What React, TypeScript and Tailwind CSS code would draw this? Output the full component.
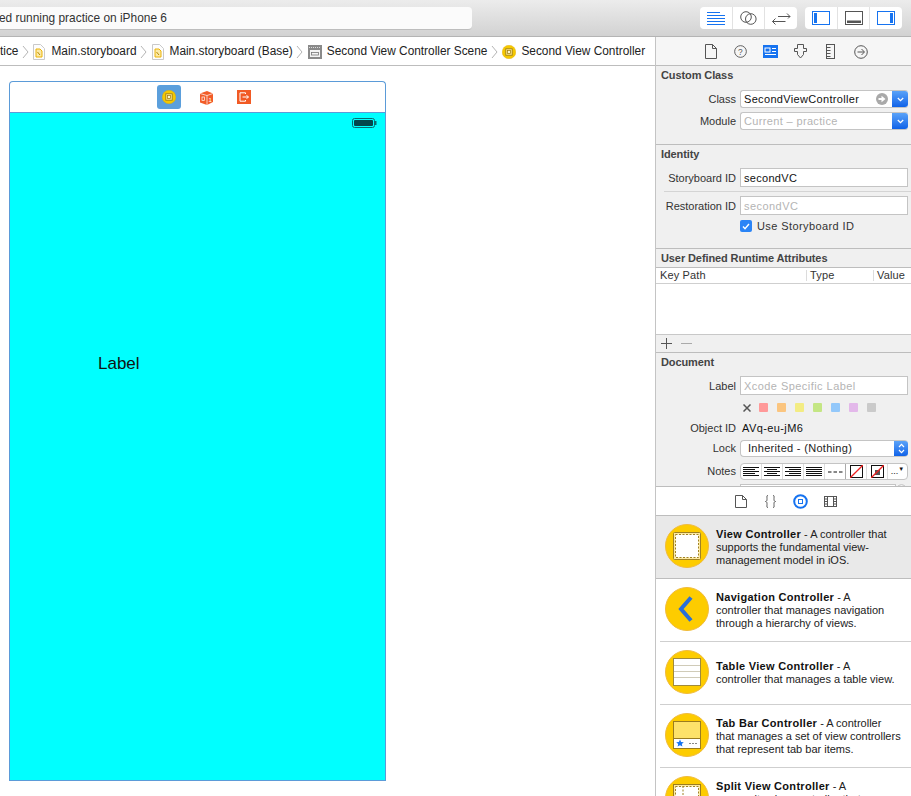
import React from "react";

const Chevron = () => (
  <svg width="8" height="14" viewBox="0 0 8 14" className="mx-[3.5px] shrink-0" fill="none" stroke="#b5b5b5" strokeWidth="1">
    <path d="M1 1l5 6-5 6" />
  </svg>
);

const DocIcon = () => (
  <svg width="12" height="16" viewBox="0 0 12 16" className="shrink-0 mr-[6px]">
    <path d="M.5.5h7l4 4v11H.5z" fill="#fdfdfd" stroke="#c9c9c9" />
    <path d="M3 5h4l2 2v6H3z" fill="#fbe9a8" stroke="#eab308" />
    <path d="M4.5 8l2.5 3" stroke="#b58a00" fill="none" />
  </svg>
);

const YellowDot = ({ size = 14 }: { size?: number }) => (
  <svg width={size} height={size} viewBox="0 0 14 14" className="shrink-0">
    <circle cx="7" cy="7" r="6.8" fill="#f5c800" stroke="#e0a800" strokeWidth=".4" />
    <rect x="3.8" y="3.8" width="6.4" height="6.4" fill="#fbe48a" stroke="#9a7a10" strokeWidth=".8" />
    <rect x="5.6" y="5.6" width="2.8" height="2.8" fill="#fff6c8" stroke="#9a7a10" strokeWidth=".7" />
  </svg>
);

const SegBtn = ({ children, w }: { children: React.ReactNode; w: string }) => (
  <div className={`${w} h-full flex items-center justify-center border-r border-[#e2e2e2] last:border-r-0`}>{children}</div>
);

const Row = ({ label, children, className = "", nudge }: { label: string; children: React.ReactNode; className?: string; nudge?: boolean }) => (
  <div className={`flex items-center shrink-0 ${className}`}>
    <div className={`w-[80px] text-right text-[11px] text-[#333] shrink-0 leading-none ${nudge ? "pt-[1px]" : ""}`}>{label}</div>
    <div className="ml-[4px] w-[168px] h-full">{children}</div>
  </div>
);

const Field = ({ text, muted }: { text: string; muted?: boolean }) => (
  <div className={`h-full bg-white border border-[#c4c4c4] pl-[3px] pt-[1px] flex items-center text-[11px] ${muted ? "text-[#b4b4b4] tracking-[.45px]" : "text-[#111] tracking-[.3px]"}`}>{text}</div>
);

const Blue = () => (
  <div className="w-[16px] h-full rounded-r-[3px] bg-gradient-to-b from-[#5aa2f8] to-[#0e62e8] flex items-center justify-center shrink-0">
    <svg width="7" height="5" viewBox="0 0 7 5" fill="none" stroke="#fff" strokeWidth="1.3"><path d="M.8 1l2.7 2.6L6.2 1" /></svg>
  </div>
);

const Header = ({ children }: { children: React.ReactNode }) => (
  <div className="pl-[5px] text-[11px] font-bold text-[#444] leading-[13px] tracking-[-.1px] shrink-0">{children}</div>
);

const Align = ({ rows }: { rows: number[] }) => (
  <svg width="16" height="10" viewBox="0 0 16 10" stroke="#111" strokeWidth="1" fill="none">
    {[1, 3, 5, 7, 9].map((y, i) => <path key={y} d={`M${(16 - rows[i]) * (rows[5] ?? 0)} ${y - .5}h${rows[i]}`} />)}
  </svg>
);

const ListItem = ({ icon, title, first, rest, active }: { icon: React.ReactNode; title: string; first: string; rest: string[]; active?: boolean }) => (
  <div className={`${active ? "bg-[#e9e9e9]" : "bg-white"} h-[63px] shrink-0`}>
    <div className={`${active ? "border-b border-[#bdbdbd] pl-[9px]" : "ml-[4px] border-b border-[#cfcfcf] pl-[5px]"} h-full flex items-center`}>
      <div className="w-[44px] h-[44px] shrink-0 -mt-[3px]">{icon}</div>
      <div className="ml-[7px] text-[11px] leading-[13px] text-[#222]">
        <div><span className="font-bold text-[#111] tracking-[.3px]">{title}</span> - {first}</div>
        {rest.map((r) => <div key={r}>{r}</div>)}
      </div>
    </div>
  </div>
);

const Circle = ({ children }: { children: React.ReactNode }) => (
  <svg width="44" height="44" viewBox="0 0 44 44">
    <circle cx="22" cy="22" r="21.5" fill="#fdcc00" stroke="#f0bb3c" />
    {children}
  </svg>
);

export default function App() {
  return (
    <div className="w-[911px] h-[796px] overflow-hidden bg-white flex flex-col [font-family:'Liberation_Sans',sans-serif]">
      {/* Toolbar */}
      <div className="h-[37px] shrink-0 bg-gradient-to-b from-[#ececec] to-[#d2d2d2] border-b border-[#b4b4b4] flex items-start">
        <div className="mt-[7px] w-[472px] h-[23px] bg-[#fbfbfb] rounded-r-[4px] border-b border-[#bdbdbd] pt-[1px] flex items-center text-[11.9px] text-[#333] overflow-hidden whitespace-nowrap">
          <span className="-ml-[1px]">ed running practice on iPhone 6</span>
        </div>
        <div className="ml-auto mr-[9px] mt-[7px] flex gap-[8px]">
          <div className="h-[22px] w-[97px] bg-white rounded-[4px] flex overflow-hidden">
            <SegBtn w="w-[33px]">
              <svg width="18" height="13" viewBox="0 0 18 13" stroke="#1673f0" fill="none"><path d="M0 .5h13M0 3.5h18M0 6.5h18M0 9.5h18M0 12.5h18" /></svg>
            </SegBtn>
            <SegBtn w="w-[32px]">
              <svg width="17" height="14" viewBox="0 0 17 14" stroke="#555" fill="none"><circle cx="6" cy="6" r="5.3" /><circle cx="10.8" cy="8" r="5.3" /></svg>
            </SegBtn>
            <SegBtn w="w-[32px]">
              <svg width="19" height="13" viewBox="0 0 19 13" stroke="#555" fill="none"><path d="M6 4.5h12M15 1.5l3 3-2 2M0.5 9.5h13M3.5 6.5l-3 3 3 3" /></svg>
            </SegBtn>
          </div>
          <div className="h-[22px] w-[97px] bg-white rounded-[4px] flex overflow-hidden">
            <SegBtn w="w-[33px]">
              <svg width="18" height="14" viewBox="0 0 18 14"><rect x=".5" y=".5" width="17" height="13" fill="none" stroke="#1673f0" /><rect x="2" y="2" width="3" height="10" fill="#1673f0" /></svg>
            </SegBtn>
            <SegBtn w="w-[32px]">
              <svg width="18" height="14" viewBox="0 0 18 14"><rect x=".5" y=".5" width="17" height="13" fill="none" stroke="#555" /><rect x="2" y="9.5" width="14" height="2.5" fill="#555" /></svg>
            </SegBtn>
            <SegBtn w="w-[32px]">
              <svg width="18" height="14" viewBox="0 0 18 14"><rect x=".5" y=".5" width="17" height="13" fill="none" stroke="#1673f0" /><rect x="13" y="2" width="3" height="10" fill="#1673f0" /></svg>
            </SegBtn>
          </div>
        </div>
      </div>

      <div className="flex-1 flex min-h-0">
        {/* Editor */}
        <div className="w-[656px] shrink-0 flex flex-col border-r border-[#c4c4c4]">
          <div className="h-[29px] shrink-0 border-b border-[#bdbdbd] pt-[1px] flex items-center overflow-hidden whitespace-nowrap text-[11.87px] text-[#222]">
            <span>tice</span><Chevron /><DocIcon /><span>Main.storyboard</span><Chevron /><DocIcon /><span>Main.storyboard (Base)</span><Chevron />
            <svg width="14" height="14" viewBox="0 0 14 14" className="shrink-0 mr-[5px]"><rect width="14" height="14" fill="#8a8a8a" /><rect x="2" y="5" width="10" height="7" fill="#f4f4f4" /><rect x="3.5" y="7.5" width="7" height="2.5" fill="none" stroke="#777" strokeWidth=".8" /><path d="M1 2.5h12" stroke="#ddd" strokeDasharray="1 1" /></svg>
            <span>Second View Controller Scene</span><Chevron />
            <span className="mr-[5px] flex"><YellowDot /></span><span>Second View Controller</span>
          </div>
          <div className="flex-1 pl-[9px] pt-[15px]">
            <div className="w-[377px] h-[700px] flex flex-col">
              <div className="h-[31px] shrink-0 rounded-t-[4px] border border-b-0 border-[#5b9bd8] flex items-center pl-[147px] bg-white">
                <div className="w-[24px] h-[24px] rounded-[3px] bg-[#5b9fdc] flex items-center justify-center"><YellowDot /></div>
                <svg width="15" height="15" viewBox="0 0 15 15" className="ml-[18px]">
                  <path d="M1 3.5L8 1l6 2.5v8.5L8 15l-7-2.5z" fill="#f25c28" />
                  <path d="M8 5.5V15M1 3.5l7 2 6-2" stroke="#fff" strokeWidth=".7" fill="none" />
                  <rect x="3" y="7" width="2.4" height="3.6" fill="none" stroke="#fff" strokeWidth=".7" />
                  <text x="9.6" y="12" fontSize="6" fill="#fff" fontFamily="Liberation Sans">1</text>
                </svg>
                <div className="ml-[23px] w-[14px] h-[14px] bg-[#f15a24] flex items-center justify-center">
                  <svg width="10" height="10" viewBox="0 0 10 10" fill="none" stroke="#fff"><path d="M6.5 2V.8H1v8.4h5.5V8M3.5 5h6M7.6 3.2L9.4 5 7.6 6.8" /></svg>
                </div>
              </div>
              <div className="flex-1 bg-[#00ffff] border border-[#5b9bd8] flex flex-col">
                <div className="flex justify-end pt-[5px] pr-[8px]">
                  <svg width="25" height="10" viewBox="0 0 25 10"><rect x=".5" y=".5" width="22" height="9" rx="2" fill="none" stroke="#0a6b70" /><rect x="2" y="2" width="19" height="6" rx="1" fill="#03474d" /><rect x="23" y="3" width="1.5" height="4" fill="#0a6b70" /></svg>
                </div>
                <div className="mt-[226px] ml-[88px] text-[17px] leading-[20px] text-[#111]">Label</div>
              </div>
            </div>
          </div>
        </div>

        {/* Inspector */}
        <div className="flex-1 min-w-0 flex flex-col bg-[#f0f0f0] overflow-hidden">
          <div className="h-[29px] shrink-0 border-b border-[#bdbdbd] bg-[#f6f6f6] pt-[1px] flex items-center pl-[49px]">
            <svg width="12" height="15" viewBox="0 0 12 15" fill="none" stroke="#555"><path d="M.5.5h7l4 4v10H.5zM7.5.5v4h4" /></svg>
            <svg width="13" height="13" viewBox="0 0 14 14" fill="none" stroke="#555" className="ml-[17px]"><circle cx="7" cy="7" r="6.3" /><text x="4.4" y="10.5" fontSize="9" fill="#555" stroke="none" fontFamily="Liberation Sans">?</text></svg>
            <svg width="15" height="13" viewBox="0 0 15 13" className="ml-[16px]"><rect width="15" height="13" fill="#1673f0" /><rect x="2" y="3" width="5" height="4" fill="none" stroke="#fff" /><path d="M9 3.5h4M9 6.5h4M2 9.5h11" stroke="#fff" /></svg>
            <svg width="13" height="15" viewBox="0 0 13 15" fill="none" stroke="#555" className="ml-[16px]"><path d="M3.5.5h6v4h3v3h-3v3l-3 3.5-3-3.5v-3h-3v-3h3z" /></svg>
            <svg width="9" height="15" viewBox="0 0 9 15" fill="none" stroke="#555" className="ml-[19px]"><rect x=".5" y=".5" width="8" height="14" /><path d="M.5 3.5h4M.5 6.5h4M.5 9.5h4M.5 12.5h4" /></svg>
            <svg width="14" height="14" viewBox="0 0 14 14" fill="none" stroke="#555" className="ml-[19px]"><circle cx="7" cy="7" r="6.3" /><path d="M3.5 7h6.5M7.5 4l3 3-3 3" /></svg>
          </div>

          {/* Custom Class */}
          <div className="h-[79px] shrink-0 border-b border-[#bdbdbd] pt-[3px] flex flex-col">
            <Header>Custom Class</Header>
            <Row label="Class" className="h-[18px] mt-[8px]">
              <div className="h-full flex rounded-[3px] bg-white border border-[#c4c4c4] border-r-0 text-[11px] text-[#111] items-center pl-[3px]">
                <span className="flex-1 tracking-[.33px]">SecondViewController</span>
                <svg width="12" height="12" viewBox="0 0 12 12" className="mr-[4px]"><circle cx="6" cy="6" r="6" fill="#a9a9a9" /><path d="M2.5 5h3V2.8L9.5 6l-4 3.2V7h-3z" fill="#fff" /></svg>
                <Blue />
              </div>
            </Row>
            <Row label="Module" className="h-[18px] mt-[4px]">
              <div className="h-full flex rounded-[3px] bg-white border border-[#c4c4c4] border-r-0 text-[11px] text-[#b4b4b4] items-center pl-[3px]">
                <span className="flex-1 tracking-[.35px]">Current – practice</span>
                <Blue />
              </div>
            </Row>
          </div>

          {/* Identity */}
          <div className="h-[104px] shrink-0 border-b border-[#bdbdbd] pt-[3px] flex flex-col">
            <Header>Identity</Header>
            <Row nudge label="Storyboard ID" className="h-[19px] mt-[7px]"><Field text="secondVC" /></Row>
            <div className="h-px shrink-0 bg-[#d4d4d4] ml-[8px] mt-[4px]" />
            <Row nudge label="Restoration ID" className="h-[19px] mt-[4px]"><Field text="secondVC" muted /></Row>
            <div className="flex shrink-0 items-center ml-[84px] mt-[5px] h-[12px]">
              <div className="w-[12px] h-[12px] rounded-[2px] bg-[#2a84f6] flex items-center justify-center">
                <svg width="8" height="7" viewBox="0 0 8 7" fill="none" stroke="#fff" strokeWidth="1.4"><path d="M1 3.5L3 5.7 7 1" /></svg>
              </div>
              <span className="ml-[5px] text-[11px] text-[#333] tracking-[.4px]">Use Storyboard ID</span>
            </div>
          </div>

          {/* Runtime attributes */}
          <div className="h-[19px] shrink-0 border-b border-[#bdbdbd] flex items-center"><Header>User Defined Runtime Attributes</Header></div>
          <div className="h-[16px] shrink-0 bg-white border-b border-[#cfcfcf] flex items-center text-[11px] text-[#333]">
            <div className="w-[150px] pl-[4px] tracking-[.15px]">Key Path</div>
            <div className="w-[67px] pl-[3px] border-l border-[#dcdcdc] leading-[11px] tracking-[.15px]">Type</div>
            <div className="pl-[3px] border-l border-[#dcdcdc] leading-[11px] tracking-[.15px]">Value</div>
          </div>
          <div className="h-[51px] shrink-0 bg-white border-b border-[#c8c8c8]" />
          <div className="h-[18px] shrink-0 border-b border-[#bdbdbd] flex items-center pl-[5px] gap-[9px]">
            <svg width="11" height="11" viewBox="0 0 11 11" stroke="#555" fill="none"><path d="M5.5 0v11M0 5.5h11" /></svg>
            <svg width="11" height="11" viewBox="0 0 11 11" stroke="#aaa" fill="none"><path d="M0 5.5h11" /></svg>
          </div>

          {/* Document */}
          <div className="h-[133px] shrink-0 pt-[3px] flex flex-col overflow-hidden">
            <Header>Document</Header>
            <Row nudge label="Label" className="h-[19px] mt-[7px]"><Field text="Xcode Specific Label" muted /></Row>
            <div className="flex shrink-0 items-center ml-[87px] mt-[7px] h-[11px] gap-[8px]">
              <svg width="8" height="8" viewBox="0 0 8 8" stroke="#555" strokeWidth="1.5"><path d="M.5.5l7 7M7.5.5l-7 7" /></svg>
              <div className="w-[9px] h-[9px] rounded-[1px] bg-[#f99] mr-[1px]" />
              <div className="w-[9px] h-[9px] rounded-[1px] bg-[#fbc57f] mr-[1px]" />
              <div className="w-[9px] h-[9px] rounded-[1px] bg-[#f3ec83] mr-[1px]" />
              <div className="w-[9px] h-[9px] rounded-[1px] bg-[#c4e684] mr-[1px]" />
              <div className="w-[9px] h-[9px] rounded-[1px] bg-[#93c8fa] mr-[1px]" />
              <div className="w-[9px] h-[9px] rounded-[1px] bg-[#e3b8ea] mr-[1px]" />
              <div className="w-[9px] h-[9px] rounded-[1px] bg-[#cacaca]" />
            </div>
            <div className="flex shrink-0 items-center h-[13px] mt-[9px]">
              <div className="w-[80px] text-right text-[11px] text-[#333] leading-none">Object ID</div>
              <div className="ml-[6px] text-[11px] text-[#111] tracking-[.4px]">AVq-eu-jM6</div>
            </div>
            <Row label="Lock" className="h-[17px] mt-[5px]">
              <div className="h-full flex rounded-[4px] bg-white border border-[#c4c4c4] border-r-0 text-[11px] text-[#222] items-center pl-[7px]">
                <span className="flex-1 tracking-[.3px]">Inherited - (Nothing)</span>
                <div className="w-[14px] h-full rounded-r-[3px] bg-gradient-to-b from-[#5aa2f8] to-[#0e62e8] flex items-center justify-center">
                  <svg width="7" height="11" viewBox="0 0 7 11" fill="none" stroke="#fff" strokeWidth="1.2"><path d="M1 4l2.5-2.6L6 4M1 7l2.5 2.6L6 7" /></svg>
                </div>
              </div>
            </Row>
            <Row label="Notes" className="h-[17px] mt-[6px]">
              <div className="h-full flex rounded-[4px] bg-white border border-[#c4c4c4] overflow-hidden">
                {[[16, 12, 16, 12, 16, 0], [16, 10, 16, 10, 16, .5], [16, 12, 16, 12, 16, 1], [16, 16, 16, 16, 16, 0]].map((r, i) => (
                  <div key={i} className="w-[21px] flex items-center justify-center border-r border-[#dcdcdc]"><Align rows={r} /></div>
                ))}
                <div className="w-[21px] flex items-center justify-center border-r border-[#aaa]">
                  <svg width="15" height="2" viewBox="0 0 15 2" stroke="#111"><path d="M0 1h15" strokeDasharray="3.5 2" /></svg>
                </div>
                <div className="w-[21px] flex items-center justify-center border-r border-[#dcdcdc]">
                  <svg width="13" height="13" viewBox="0 0 13 13" fill="none"><rect x=".5" y=".5" width="12" height="12" stroke="#111" /><path d="M0 13L13 0" stroke="#f02020" strokeWidth="1.3" /></svg>
                </div>
                <div className="w-[21px] flex items-center justify-center border-r border-[#dcdcdc]">
                  <svg width="13" height="13" viewBox="0 0 13 13" fill="none"><rect x=".5" y=".5" width="12" height="12" stroke="#111" /><rect x="4" y="5" width="5" height="5" fill="#555" /><path d="M0 13L13 0" stroke="#f02020" strokeWidth="1.3" /></svg>
                </div>
                <div className="flex-1 flex items-center justify-center text-[9px] text-[#111] leading-none">...<span className="text-[6px] -mt-[6px]">▼</span></div>
              </div>
            </Row>
            <div className="flex shrink-0 items-start mt-[4px] ml-[84px]">
              <div className="w-[156px] h-[10px] bg-white border border-[#c4c4c4]" />
              <div className="ml-[1px] w-[9px] h-[9px] rounded-full border border-[#c4c4c4]" />
            </div>
          </div>

          {/* Library tabs */}
          <div className="h-[30px] shrink-0 bg-white border-y border-[#bdbdbd] flex items-center pl-[79px]">
            <svg width="12" height="13" viewBox="0 0 12 13" fill="none" stroke="#555"><path d="M.5.5h7l4 4v8H.5zM7.5.5v4h4" /></svg>
            <svg width="11" height="13" viewBox="0 0 11 13" fill="none" stroke="#555" className="ml-[18px]"><path d="M3 .5C1.5.5 2 1.5 2 3.5S2 6 .5 6.5C2 7 2 7.5 2 9.5S1.5 12.5 3 12.5M8 .5c1.5 0 1 1 1 3s0 2.5 1.5 3C9 7 9 7.5 9 9.5s.5 3-1 3" /></svg>
            <svg width="15" height="15" viewBox="0 0 15 15" fill="none" className="ml-[17px]"><circle cx="7.5" cy="7.5" r="6.3" stroke="#1673f0" strokeWidth="2" /><rect x="5.5" y="5.5" width="4" height="4" stroke="#1673f0" /></svg>
            <svg width="13" height="11" viewBox="0 0 13 11" fill="none" stroke="#555" className="ml-[16px]"><rect x=".5" y=".5" width="12" height="10" /><path d="M3.5.5v10M9.5.5v10M.5 3h3M.5 5.5h3M.5 8h3M9.5 3h3M9.5 5.5h3M9.5 8h3" /></svg>
          </div>

          {/* Library list */}
          <ListItem
            active
            title="View Controller"
            first="A controller that"
            rest={["supports the fundamental view-", "management model in iOS."]}
            icon={<Circle><rect x="8.5" y="8.5" width="27" height="27" rx="1" fill="#fde9a0" stroke="#a08224" /><rect x="10.5" y="10.5" width="23" height="23" fill="#fff" stroke="#a08224" strokeDasharray="2 1.5" /></Circle>}
          />
          <ListItem
            title="Navigation Controller"
            first="A"
            rest={["controller that manages navigation", "through a hierarchy of views."]}
            icon={<Circle><path d="M26 10.5L16 22l10 11.5" fill="none" stroke="#2a6fd8" strokeWidth="4" /></Circle>}
          />
          <ListItem
            title="Table View Controller"
            first="A"
            rest={["controller that manages a table view."]}
            icon={<Circle><rect x="8.5" y="8.5" width="27" height="27" fill="#fff" stroke="#a08a3c" /><path d="M9 15.5h26M9 21.5h26M9 27.5h26" stroke="#d0cbb8" /></Circle>}
          />
          <ListItem
            title="Tab Bar Controller"
            first="A controller"
            rest={["that manages a set of view controllers", "that represent tab bar items."]}
            icon={<Circle><rect x="8.5" y="8.5" width="27" height="27" fill="#fff" stroke="#9a7c20" /><rect x="9" y="9" width="26" height="16" fill="#fde26a" /><path d="M9 25.5h26" stroke="#9a7c20" /><path d="M15 26.5l1.1 2.5 2.7.2-2 1.8.6 2.6-2.4-1.4-2.4 1.4.6-2.6-2-1.8 2.7-.2z" fill="#1673f0" /><path d="M24 30.5h2M27 30.5h2M30 30.5h2" stroke="#888" /></Circle>}
          />
          <ListItem
            title="Split View Controller"
            first="A"
            rest={["composite view controller that", "manages split views."]}
            icon={<Circle><rect x="8.5" y="8.5" width="27" height="27" fill="#fde9a0" stroke="#9a7c20" /><rect x="10.5" y="10.5" width="23" height="23" fill="#fff" stroke="#a08224" strokeDasharray="2 1.5" /><path d="M18 10v24" stroke="#a08224" strokeDasharray="2 1.5" /></Circle>}
          />
        </div>
      </div>
    </div>
  );
}
